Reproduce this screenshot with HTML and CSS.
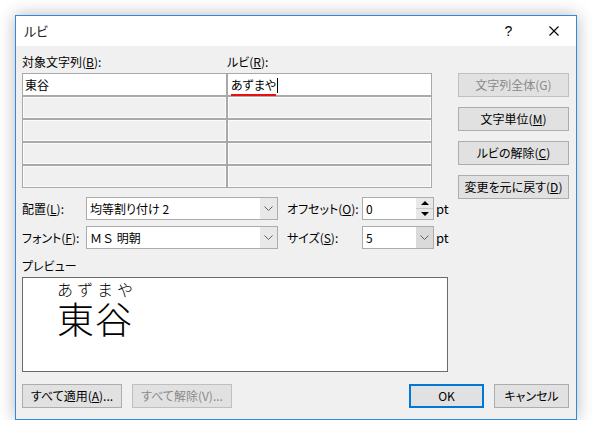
FILE: index.html
```html
<!DOCTYPE html>
<html lang="ja">
<head>
<meta charset="utf-8">
<title>ルビ</title>
<link rel="stylesheet" href="styles.css">
</head>
<body>
<div class="window">
  <div class="titlebar">
    <span class="title">ルビ</span>
    <span class="tb-btn help">?</span>
    <span class="tb-btn close"><svg width="10" height="10" viewBox="0 0 10 10"><path d="M0.5 0.5L9.5 9.5M9.5 0.5L0.5 9.5" stroke="#000" stroke-width="1.1" fill="none"/></svg></span>
  </div>
  <div class="content">
    <div class="main">
      <div class="left">
        <div class="col-labels">
          <span>対象文字列(<u>B</u>):</span>
          <span>ルビ(<u>R</u>):</span>
        </div>
        <div class="table">
          <div class="cell active base-cell">東谷</div>
          <div class="cell active ruby-cell"><span class="ime">あずまや</span><span class="caret"></span></div>
          <div class="cell"></div>
          <div class="cell"></div>
          <div class="cell"></div>
          <div class="cell"></div>
          <div class="cell"></div>
          <div class="cell"></div>
          <div class="cell"></div>
          <div class="cell"></div>
        </div>
        <div class="form-row first">
          <span class="lbl1">配置(<u>L</u>):</span>
          <div class="combo wide"><span class="field-text">均等割り付け 2</span><span class="drop"><svg width="9" height="5" viewBox="0 0 9 5"><path d="M0.5 0.5L4.5 4.5L8.5 0.5" stroke="#606060" fill="none"/></svg></span></div>
          <span class="lbl2">オフセット(<u>O</u>):</span>
          <div class="combo small"><span class="field-text">0</span><span class="spin-btns"><span class="spin-half"><span class="tri-up"></span></span><span class="spin-half"><span class="tri-down"></span></span></span></div>
          <span class="unit">pt</span>
        </div>
        <div class="form-row">
          <span class="lbl1">フォント(<u>F</u>):</span>
          <div class="combo wide"><span class="field-text fullwidth">ＭＳ 明朝</span><span class="drop"><svg width="9" height="5" viewBox="0 0 9 5"><path d="M0.5 0.5L4.5 4.5L8.5 0.5" stroke="#606060" fill="none"/></svg></span></div>
          <span class="lbl2">サイズ(<u>S</u>):</span>
          <div class="combo small"><span class="field-text">5</span><span class="drop hot"><svg width="9" height="5" viewBox="0 0 9 5"><path d="M0.5 0.5L4.5 4.5L8.5 0.5" stroke="#606060" fill="none"/></svg></span></div>
          <span class="unit">pt</span>
        </div>
        <div class="preview-label">プレビュー</div>
        <div class="preview">
          <div class="ruby-block">
            <div class="rt">あずまや</div>
            <div class="rb">東谷</div>
          </div>
        </div>
      </div>
      <div class="right">
        <div class="btn disabled">文字列全体(G)</div>
        <div class="btn">文字単位(<u>M</u>)</div>
        <div class="btn">ルビの解除(<u>C</u>)</div>
        <div class="btn">変更を元に戻す(<u>D</u>)</div>
      </div>
    </div>
    <div class="footer">
      <div class="btn wide-btn">すべて適用(<u>A</u>)...</div>
      <div class="btn wide-btn disabled">すべて解除(V)...</div>
      <div class="btn std-btn ok">OK</div>
      <div class="btn std-btn">キャンセル</div>
    </div>
  </div>
</div>
</body>
</html>
```

FILE: styles.css
```css
* { box-sizing: border-box; }
html, body { margin: 0; }
body {
  background: #fff;
  padding: 15px 0 0 15px;
  font-family: "Noto Sans CJK JP", "Noto Sans", sans-serif;
  font-size: 12px;
  color: #000;
  font-feature-settings: "palt";
}
u { text-decoration: underline; text-underline-offset: 1px; }

.window {
  width: 562px;
  height: 405px;
  border: 1px solid #2b8be0;
  background: #f0f0f0;
  box-shadow: 0 0 16px rgba(0, 0, 0, 0.28);
  display: flex;
  flex-direction: column;
}
.titlebar {
  height: 30px;
  flex: none;
  background: #fff;
  display: flex;
  align-items: center;
  padding-left: 8px;
}
.title { flex: 1; line-height: 16px; color: #222; font-size: 13px; }
.tb-btn {
  width: 45px;
  height: 30px;
  display: flex;
  align-items: center;
  justify-content: center;
}
.help { font-size: 14px; font-family: "Liberation Sans", sans-serif; }

.content {
  flex: 1;
  display: flex;
  flex-direction: column;
  padding: 8px 7px 0 6px;
}
.main { display: flex; }
.left { width: 426px; }
.right {
  width: 111px;
  margin-left: auto;
  display: flex;
  flex-direction: column;
  gap: 10px;
  padding-top: 19px;
}

.col-labels {
  display: grid;
  grid-template-columns: 205px 1fr;
  line-height: 16px;
  height: 16px;
  margin-bottom: 3px;
  white-space: nowrap;
}

.table {
  width: 410px;
  display: grid;
  grid-template-columns: 203px 203px;
  grid-auto-rows: 21px;
  gap: 2px;
  background: #a9a9a9;
  border: 1px solid #a9a9a9;
}
.cell {
  background: #f0f0f0;
  border: 1px solid #fbfbfb;
}
.cell.active {
  background: #fff;
  border: none;
  line-height: 21px;
  white-space: nowrap;
}
.base-cell { padding-left: 2px; }
.ruby-cell { padding-left: 3px; }
.ime {
  text-decoration: underline;
  text-decoration-color: #e81010;
  text-decoration-thickness: 2px;
  text-underline-offset: 4px;
}
.caret {
  display: inline-block;
  width: 1px;
  height: 15px;
  background: #000;
  vertical-align: -3px;
  margin-left: 1px;
}

.form-row {
  display: flex;
  align-items: center;
  height: 23px;
  margin-top: 6px;
  line-height: 16px;
  white-space: nowrap;
}
.form-row.first { margin-top: 9px; }
.lbl1 { width: 64px; flex: none; }
.lbl2 { width: 75px; flex: none; margin-left: 9px; }
.unit { margin-left: 2px; font-size: 13px; }

.combo {
  flex: none;
  height: 23px;
  border: 1px solid #acacac;
  background: #fff;
  display: flex;
}
.combo.wide { width: 192px; }
.combo.small { width: 72px; }
.field-text {
  flex: 1;
  padding-left: 3px;
  line-height: 21px;
  white-space: nowrap;
}
.field-text.fullwidth { font-feature-settings: normal; }
.drop {
  width: 17px;
  background: #e8e8e8;
  display: flex;
  align-items: center;
  justify-content: center;
}
.drop.hot { background: #dadada; }
.spin-btns {
  width: 17px;
  display: flex;
  flex-direction: column;
  gap: 1px;
  background: #c8c8c8;
}
.spin-half {
  flex: 1;
  background: #e8e8e8;
  display: flex;
  align-items: center;
  justify-content: center;
}
.tri-up {
  width: 0; height: 0;
  border-left: 4px solid transparent;
  border-right: 4px solid transparent;
  border-bottom: 4px solid #000;
}
.tri-down {
  width: 0; height: 0;
  border-left: 4px solid transparent;
  border-right: 4px solid transparent;
  border-top: 4px solid #000;
}

.preview-label {
  margin-top: 9px;
  line-height: 16px;
}
.preview {
  margin-top: 3px;
  height: 95px;
  border: 1px solid #6a6a6a;
  background: #fff;
  padding: 3px 0 0 34px;
  font-feature-settings: normal;
}
.ruby-block { width: 76px; }
.rt {
  font-size: 16px;
  line-height: 17px;
  text-align: justify;
  text-align-last: justify;
  font-weight: 300;
}
.rb {
  font-size: 37px;
  line-height: 40px;
  font-weight: 300;
  white-space: nowrap;
  letter-spacing: 1px;
}

.btn {
  height: 24px;
  border: 1px solid #adadad;
  background: #e1e1e1;
  text-align: center;
  line-height: 22px;
  white-space: nowrap;
}
.btn.disabled {
  color: #8a8a8a;
  border-color: #bfbfbf;
}
.footer {
  margin-top: 12px;
  display: flex;
  gap: 10px;
}
.wide-btn { width: 100px; }
.std-btn { width: 75px; }
.ok {
  margin-left: auto;
  border: 2px solid #0078d7;
  line-height: 20px;
}
```
